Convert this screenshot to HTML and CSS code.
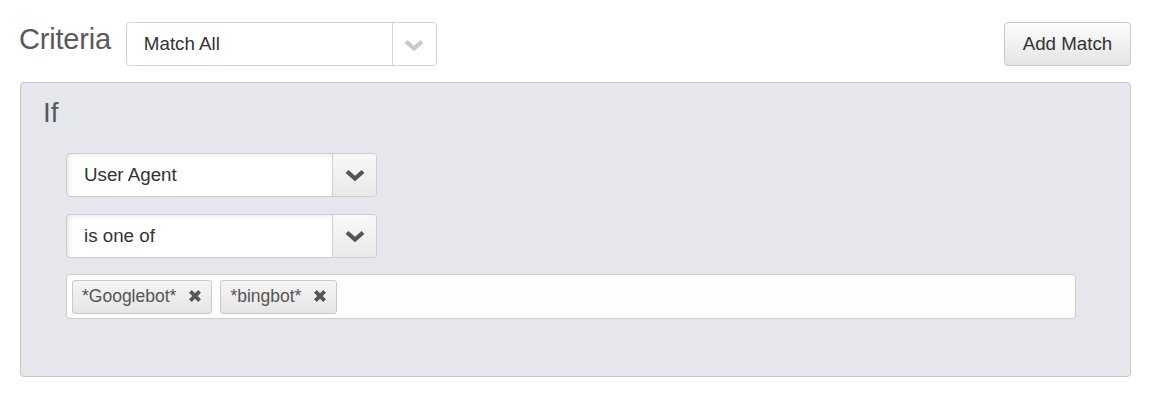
FILE: index.html
```html
<!DOCTYPE html>
<html>
<head>
<meta charset="utf-8">
<link rel="stylesheet" href="styles.css">
</head>
<body>
<div class="page">
  <div class="header">
    <h2 class="title">Criteria</h2>
    <div class="select light">
      <span class="select-text">Match All</span>
      <span class="select-arrow">
        <svg width="20" height="12" viewBox="0 0 20 12"><path d="M2 2.5 L10 9.5 L18 2.5" fill="none" stroke="currentColor" stroke-width="4.2"/></svg>
      </span>
    </div>
    <div class="spacer"></div>
    <button class="btn">Add Match</button>
  </div>
  <div class="panel">
    <div class="panel-title">If</div>
    <div class="rows">
      <div class="select dark">
        <span class="select-text">User Agent</span>
        <span class="select-arrow">
          <svg width="20" height="12" viewBox="0 0 20 12"><path d="M2 2.5 L10 9.5 L18 2.5" fill="none" stroke="currentColor" stroke-width="4.2"/></svg>
        </span>
      </div>
      <div class="select dark">
        <span class="select-text">is one of</span>
        <span class="select-arrow">
          <svg width="20" height="12" viewBox="0 0 20 12"><path d="M2 2.5 L10 9.5 L18 2.5" fill="none" stroke="currentColor" stroke-width="4.2"/></svg>
        </span>
      </div>
      <div class="tags">
        <span class="tag">*Googlebot*<svg class="x" width="14" height="14" viewBox="0 0 14 14"><path d="M2.4 2.4 L11.6 11.6 M11.6 2.4 L2.4 11.6" stroke="currentColor" stroke-width="3.8"/></svg></span>
        <span class="tag">*bingbot*<svg class="x" width="14" height="14" viewBox="0 0 14 14"><path d="M2.4 2.4 L11.6 11.6 M11.6 2.4 L2.4 11.6" stroke="currentColor" stroke-width="3.8"/></svg></span>
      </div>
    </div>
  </div>
</div>
</body>
</html>
```
FILE: styles.css
```css
* { box-sizing: border-box; }
html, body { margin: 0; padding: 0; background: #fff; }
body { font-family: "Liberation Sans", Arial, sans-serif; color: #333; }
.page { padding: 22px 21px 0 20px; width: 1152px; }
.header { display: flex; align-items: flex-start; height: 44px; }
.title {
  font-size: 29px; font-weight: normal; color: #5a5a5a; line-height: 29px;
  margin: 2.5px 15px 0 -1px; letter-spacing: -0.2px;
}
.spacer { flex: 1; }
.select {
  display: flex; width: 311px; height: 44px;
  border: 1px solid #d4d4d4; border-radius: 4px; background: #fff; overflow: hidden;
}
.select-text { flex: 1; display: flex; align-items: center; padding-left: 17px; font-size: 18.75px; color: #333; }
.select-arrow { width: 44px; display: flex; align-items: center; justify-content: center; border-left: 1px solid #d8d8d8; }
.select.light .select-arrow { color: #c8c8c8; padding-top: 1px; }
.select.dark { border-color: #cdcdcd; }
.select.dark .select-text { padding-left: 17px; box-shadow: inset 4px 3px 6px -3px rgba(0,0,0,0.12); padding-bottom: 1px; }
.select.dark .select-arrow { color: #555; background: linear-gradient(#f9f9f9, #e9e9e9); border-left-color: #cfcfcf; }
.btn {
  width: 127px; height: 44px; font-family: inherit; font-size: 18.75px; color: #333;
  border: 1px solid #c8c8c8; border-radius: 4px; background: linear-gradient(#fdfdfd, #e4e4e4);
  padding: 0;
}
.panel {
  margin-top: 16px; height: 295px; width: 1111px;
  background: #e6e7ec; border: 1px solid #c8c8c8; border-radius: 4px;
  padding: 15px 0 0 22px;
}
.panel-title { font-size: 28px; color: #5a5a5a; line-height: 30px; }
.rows { display: flex; flex-direction: column; gap: 17px; margin: 25px 0 0 23px; }
.tags {
  width: 1010px; height: 45px; background: #fdfdfd; border: 1px solid #cdcdcd; border-radius: 4px;
  display: flex; align-items: center; gap: 8px; padding: 0 5px; margin-top: -1px;
}
.tag {
  display: inline-flex; align-items: center; height: 34px; padding: 0 9px 1px 9px;
  border: 1px solid #c9c9c9; border-radius: 3px; background: linear-gradient(#f4f4f4, #e6e6e6);
  font-size: 17.5px; color: #555;
}
.tag .x { margin-left: 12px; color: #555; }
```
